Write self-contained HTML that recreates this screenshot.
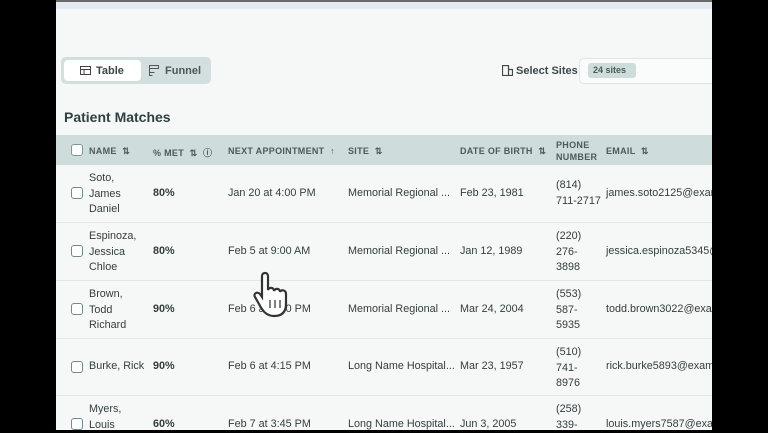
<!DOCTYPE html>
<html><head><style>
*{margin:0;padding:0;box-sizing:border-box}
body{width:768px;height:433px;background:#000;position:relative;overflow:hidden;font-family:"Liberation Sans",sans-serif;color:#2e3a3a}
#pg{position:absolute;left:56px;top:0;width:656px;height:430px;background:#f6f8f8;overflow:hidden}
.top{position:absolute;left:0;top:0;width:656px;height:2px;background:#6a6a6a}
.band{position:absolute;left:0;top:2px;width:656px;height:7px;background:#e3eaf2}
.seg{position:absolute;left:5px;top:57px;width:150px;height:27px;background:#d3dede;border-radius:5px}
.seg .on{position:absolute;left:3px;top:3px;width:77px;height:21px;background:#fff;border-radius:4px}
.lbl{position:absolute;font-size:11px;font-weight:bold;color:#3c4848}
h1{position:absolute;left:8px;top:109px;font-size:14px;color:#2f4040;font-weight:bold}
.hdr{position:absolute;left:0;top:135px;width:656px;height:30px;background:#cfdcdc}
.h{position:absolute;font-size:9px;font-weight:bold;color:#4c5a5a;letter-spacing:.3px}
.row{position:absolute;left:0;width:656px;border-bottom:1px solid #e2e8e8}
.c{position:absolute;font-size:10.8px;color:#333d3d;line-height:15.5px}
.b{font-weight:bold}
.cb{position:absolute;left:15px;width:12px;height:12px;border:1.3px solid #6e8c8c;border-radius:3px;background:#fff}
</style></head><body>
<div id="pg">
<div class="top"></div><div class="band"></div>
<div class="seg"><div class="on"></div>
<svg style="position:absolute;left:19px;top:9px" width="11" height="9"><rect x=".5" y=".5" width="10" height="8" fill="none" stroke="#444"/><line x1="0" y1="3.5" x2="11" y2="3.5" stroke="#444"/><line x1="4" y1="3" x2="4" y2="9" stroke="#444"/></svg>
<div class="lbl" style="left:35px;top:8px">Table</div>
<svg style="position:absolute;left:88px;top:8px" width="10" height="11"><path d="M.5 .5h9v3h-9zM.5 3.5v4h5M.5 7.5v3h3" fill="none" stroke="#555"/></svg>
<div class="lbl" style="left:104px;top:8px;color:#4a5858">Funnel</div>
</div>
<svg style="position:absolute;left:446px;top:65px" width="11" height="11"><path d="M.5 10.5v-10h6v10M6.5 4.5h4v6M0 10.5h11" fill="none" stroke="#444" stroke-width="1.2"/></svg>
<div class="lbl" style="left:460px;top:65px">Select Sites</div>
<div style="position:absolute;left:523px;top:58px;width:140px;height:26px;border:1px solid #dfe5e5;border-radius:5px;background:#fafbfb"></div>
<div style="position:absolute;left:532px;top:63px;width:48px;height:15px;background:#cfdcdc;border-radius:3px;font-size:9px;font-weight:bold;color:#4c5a5a;padding:2px 5px">24 sites</div>
<h1>Patient Matches</h1>
<div class="hdr">
<div class="cb" style="top:9px;border-color:#7e9898"></div>
<div class="h" style="left:33px;top:11px">NAME &nbsp;⇅</div>
<div class="h" style="left:97px;top:11px">% MET &nbsp;⇅ &nbsp;ⓘ</div>
<div class="h" style="left:172px;top:11px">NEXT APPOINTMENT &nbsp;↑</div>
<div class="h" style="left:292px;top:11px">SITE &nbsp;⇅</div>
<div class="h" style="left:404px;top:11px">DATE OF BIRTH &nbsp;⇅</div>
<div class="h" style="left:500px;top:4px;line-height:12px">PHONE<br>NUMBER</div>
<div class="h" style="left:550px;top:11px">EMAIL &nbsp;⇅</div>
</div>

<div class="row" style="top:165px;height:58px">
<div class="cb" style="top:22px"></div>
<div class="c" style="left:33px;top:6px">Soto,<br>James<br>Daniel</div>
<div class="c b" style="left:97px;top:21px">80%</div>
<div class="c" style="left:172px;top:21px">Jan 20 at 4:00 PM</div>
<div class="c" style="left:292px;top:21px">Memorial Regional ...</div>
<div class="c" style="left:404px;top:21px">Feb 23, 1981</div>
<div class="c" style="left:500px;top:13px">(814)<br>711-2717</div>
<div class="c" style="left:550px;top:21px">james.soto2125@exam</div>
</div>
<div class="row" style="top:223px;height:58px">
<div class="cb" style="top:22px"></div>
<div class="c" style="left:33px;top:6px">Espinoza,<br>Jessica<br>Chloe</div>
<div class="c b" style="left:97px;top:21px">80%</div>
<div class="c" style="left:172px;top:21px">Feb 5 at 9:00 AM</div>
<div class="c" style="left:292px;top:21px">Memorial Regional ...</div>
<div class="c" style="left:404px;top:21px">Jan 12, 1989</div>
<div class="c" style="left:500px;top:6px">(220)<br>276-<br>3898</div>
<div class="c" style="left:550px;top:21px">jessica.espinoza5345@</div>
</div>
<div class="row" style="top:281px;height:58px">
<div class="cb" style="top:22px"></div>
<div class="c" style="left:33px;top:6px">Brown,<br>Todd<br>Richard</div>
<div class="c b" style="left:97px;top:21px">90%</div>
<div class="c" style="left:172px;top:21px">Feb 6 at 4:00 PM</div>
<div class="c" style="left:292px;top:21px">Memorial Regional ...</div>
<div class="c" style="left:404px;top:21px">Mar 24, 2004</div>
<div class="c" style="left:500px;top:6px">(553)<br>587-<br>5935</div>
<div class="c" style="left:550px;top:21px">todd.brown3022@exan</div>
</div>
<div class="row" style="top:339px;height:57px">
<div class="cb" style="top:22px"></div>
<div class="c" style="left:33px;top:20px">Burke, Rick</div>
<div class="c b" style="left:97px;top:20px">90%</div>
<div class="c" style="left:172px;top:20px">Feb 6 at 4:15 PM</div>
<div class="c" style="left:292px;top:20px">Long Name Hospital...</div>
<div class="c" style="left:404px;top:20px">Mar 23, 1957</div>
<div class="c" style="left:500px;top:6px">(510)<br>741-<br>8976</div>
<div class="c" style="left:550px;top:20px">rick.burke5893@exam</div>
</div>
<div class="row" style="top:396px;height:58px">
<div class="cb" style="top:22px"></div>
<div class="c" style="left:33px;top:6px">Myers,<br>Louis</div>
<div class="c b" style="left:97px;top:21px">60%</div>
<div class="c" style="left:172px;top:21px">Feb 7 at 3:45 PM</div>
<div class="c" style="left:292px;top:21px">Long Name Hospital...</div>
<div class="c" style="left:404px;top:21px">Jun 3, 2005</div>
<div class="c" style="left:500px;top:6px">(258)<br>339-</div>
<div class="c" style="left:550px;top:21px">louis.myers7587@exan</div>
</div>
<svg style="position:absolute;left:196px;top:270px" width="40" height="50"><path d="M10 6c0-4 6-4 6 0v14c1-3 6-3 6 1 1-3 6-3 6 1 1-3 6-2 6 2v10c0 8-4 12-12 12s-12-6-15-12l-4-7c-2-3 2-6 5-3l2 3z" fill="#fff" stroke="#333" stroke-width="2.2"/><path d="M18 30v8M23 30v8M28 30v8" stroke="#555" stroke-width="1.5"/></svg>
</div>
</body></html>
